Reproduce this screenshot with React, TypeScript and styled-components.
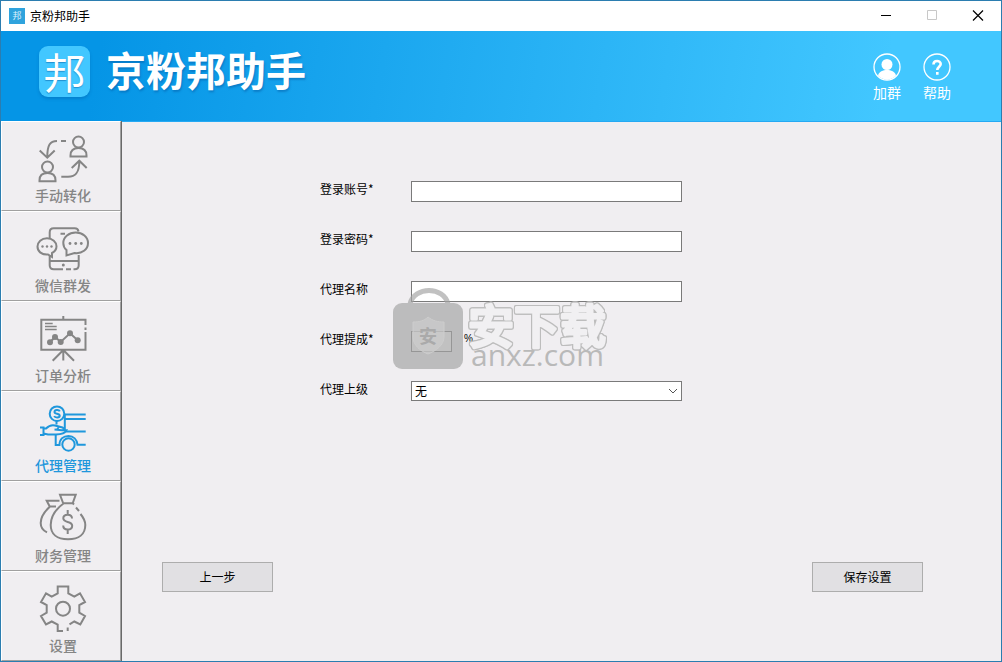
import React from "react";
import styled, { createGlobalStyle, css } from "styled-components";

const SANS = `"Noto Sans CJK SC", "Noto Sans", sans-serif`;
const LINE = "#7a7a7a";
const FACE = "#f0eef1";

const GlobalStyle = createGlobalStyle`
  *, *::before, *::after { box-sizing: border-box; }
  body { margin: 0; font: 12px/20px ${SANS}; color: #000; background: ${FACE}; }
  button, input, select { font: inherit; color: inherit; border-radius: 0; }
`;

const Window = styled.div`
  min-height: 100vh;
  display: flex;
  flex-direction: column;
  border: 1px solid #2b7db0;
  background: ${FACE};
`;

const TitleBar = styled.div`
  display: flex;
  align-items: center;
  height: 30px;
  padding-left: 8px;
  background: #fff;
  line-height: 18px;
`;

const TitleIcon = styled.span`
  display: grid;
  place-items: center;
  width: 16px;
  height: 16px;
  margin-right: 5px;
  background: #2fa3dd;
  color: #d9f2ff;
  font-size: 9px;
  line-height: 16px;
`;

const WindowControls = styled.div`
  display: flex;
  margin-left: auto;
`;

const WindowButton = styled.button`
  display: grid;
  place-items: center;
  width: 46px;
  height: 30px;
  padding: 0;
  border: 0;
  background: transparent;
`;

const Banner = styled.header`
  display: flex;
  align-items: center;
  height: 90px;
  padding: 0 39px 0 38px;
  background: linear-gradient(100deg, #0595e6 10%, #42c7ff 88%);
  color: #fff;
`;

const Logo = styled.span`
  display: grid;
  place-items: center;
  width: 51px;
  height: 51px;
  margin: 0 16px 10px 0;
  border-radius: 9px;
  background: #42c7ff;
  box-shadow: 0 2px 3px rgba(0, 80, 150, 0.3);
  font-size: 42px;
  line-height: 48px;
  text-shadow: 0 1px 1px rgba(0, 90, 160, 0.5);
`;

const BrandName = styled.h1`
  margin: 0 auto 14px 0;
  font-size: 40px;
  line-height: 50px;
  font-weight: 700;
  text-shadow: 1px 2px 2px rgba(0, 70, 140, 0.35);
`;

const BannerAction = styled.button`
  display: flex;
  flex-direction: column;
  align-items: center;
  width: 50px;
  padding: 4px 0 0;
  border: 0;
  background: transparent;
  color: #fff;
  font-size: 14px;
  line-height: 22px;
`;

const Body = styled.div`
  flex: 1;
  display: flex;
`;

const Sidebar = styled.nav`
  width: 121px;
  border-right: 1px solid #696969;
`;

const NavItem = styled.button<{ $active?: boolean }>`
  display: flex;
  flex-direction: column;
  align-items: center;
  width: 100%;
  height: 90px;
  padding: 10px 0 0 4px;
  border: 1px solid;
  border-color: #fff #a0a0a0 #a0a0a0 #fff;
  background: transparent;
  color: ${(p) => (p.$active ? "#1f97dc" : "#858585")};
  font-size: 14px;
  font-weight: 500;
  line-height: 18px;
`;

const NavIcon = styled.svg`
  display: block;
  width: 56px;
  height: 54px;
  fill: none;
  stroke: currentColor;
  stroke-width: 2;
`;

const Content = styled.main`
  flex: 1;
  display: flex;
  flex-direction: column;
  justify-content: space-between;
  border-top: 1px solid #25a9f3;
`;

const Form = styled.form`
  position: relative;
  display: grid;
  gap: 29px;
  width: 362px;
  margin: 59px 0 40px 198px;
`;

const Row = styled.div`
  display: flex;
  height: 21px;
`;

const Label = styled.label`
  width: 91px;
  line-height: 16px;
`;

const field = css`
  border: 1px solid ${LINE};
  background: #fff;
  outline: 0;
`;

const TextBox = styled.input<{ $short?: boolean }>`
  ${field}
  width: ${(p) => (p.$short ? "41px" : "271px")};
  height: 21px;
  padding: 0 4px;
`;

const Unit = styled.span`
  margin-left: 12px;
  font-family: "Liberation Sans", sans-serif;
  font-size: 10px;
  line-height: 16px;
`;

const SelectWrap = styled.div`
  display: grid;
  grid-template: "box" 20px / 271px;
  align-items: center;
`;

const Select = styled.select`
  ${field}
  grid-area: box;
  height: 20px;
  padding: 0 3px;
  line-height: 16px;
  appearance: none;
`;

const Chevron = styled.svg`
  grid-area: box;
  justify-self: end;
  margin-right: 4px;
  fill: none;
  stroke: #555;
  pointer-events: none;
`;

const Actions = styled.div`
  display: flex;
  justify-content: space-between;
  padding: 0 78px 69px 40px;
`;

const PushButton = styled.button`
  width: 111px;
  height: 30px;
  padding: 0;
  border: 1px solid #adadad;
  background: #e1e0e3;
`;

const Watermark = styled.svg`
  position: absolute;
  left: 72px;
  top: 106px;
  width: 220px;
  height: 86px;
  pointer-events: none;
`;

const Outlined = styled.text`
  font: 500 46px/1 ${SANS};
  fill: #f1f0f2;
  stroke: #f1f0f2;
  stroke-width: 3;
  stroke-linejoin: round;
  filter: drop-shadow(1px 0 0 #bdbdbd) drop-shadow(-1px 0 0 #bdbdbd)
    drop-shadow(0 1px 0 #bdbdbd) drop-shadow(0 -1px 0 #bdbdbd);
`;

const Domain = styled.text`
  font: 30px/1 "Open Sans", sans-serif;
  fill: #b9b9b9;
`;

const navItems = [
  {
    label: "手动转化",
    icon: (
      <>
        <circle cx="43.5" cy="10" r="5.5" />
        <path d="M35.5 24.5V23.5C35.5 18.500 38.500 16 43.500 16S51.500 18.500 51.500 23.500V24.500Z" />
        <circle cx="12.500" cy="35" r="5.500" />
        <path d="M4.500 49.300V48.300C4.500 43.300 7.500 41 12.500 41S20.500 43.300 20.500 48.300V49.300Z" />
        <path d="M31 9H26M22 9C15 9 12.300 13 12.300 25M4.700 18.500L12.300 25.700L19.700 18.500" />
        <path d="M26.300 44.700H33C41 44.700 44.300 40 44.300 29.500M36.700 36L44.300 28.700L51.700 36" />
      </>
    ),
  },
  {
    label: "微信群发",
    icon: (
      <>
        <path d="M14.700 16V10.300Q14.700 6.300 18.700 6.300H39.700Q43 6.300 43.500 9.500M14.700 33V43.300Q14.700 47.300 18.700 47.300H28M31 47.300H36M38.500 47.300H39.700Q43.700 47.300 43.700 43.300V33M15 39H43.500M25.500 11.700H30" />
        <circle cx="28.300" cy="43" r="1.500" fill="currentColor" stroke="none" />
        <path d="M13 32.500C6 33 2.500 29 2.500 24.500C2.500 20 6.500 16.200 12 16.200C17.500 16.200 21.500 20 21.500 24.300C21.500 27 20 29.500 17 31V35Z" />
        <path d="M31.500 28C29 26 28.300 23.500 28.300 21C28.300 15 34 10.500 40.700 10.500C47.500 10.500 53 15 53 21C53 27.500 47 32 39.500 31L31.500 33.500Z" />
        <g fill="currentColor" stroke="none">
          <circle cx="7.500" cy="24.500" r="1.200" />
          <circle cx="12" cy="24.500" r="1.200" />
          <circle cx="16.500" cy="24.500" r="1.200" />
          <circle cx="35" cy="21.500" r="1.400" />
          <circle cx="40.700" cy="21.500" r="1.400" />
          <circle cx="46.300" cy="21.500" r="1.400" />
        </g>
      </>
    ),
  },
  {
    label: "订单分析",
    icon: (
      <>
        <path d="M50.500 13V7.700H6.300V37.700H50.500V20M50.500 15.500V18M28.300 4V7.700M28.300 38V48.500M28.300 38L17.700 48.700M28.300 38L39 48.700" />
        <path d="M10 11.500H17.700M10 14.500H21.700M10 17.500H21.700" strokeWidth="1.300" />
        <path d="M15 30.300L20 25L25.700 30L35 21.300L42.700 28.300" />
        <g fill="currentColor" stroke="none">
          <circle cx="15" cy="30.300" r="3" />
          <circle cx="20" cy="25" r="3" />
          <circle cx="25.700" cy="30" r="3" />
          <circle cx="35" cy="21.300" r="3" />
          <circle cx="42.700" cy="28.300" r="3" />
        </g>
      </>
    ),
  },
  {
    label: "代理管理",
    icon: (
      <>
        <circle cx="22" cy="11.700" r="7.300" />
        <path d="M24.800 9.300C24 7.500 19.500 7.500 19.500 10C19.500 12.500 24.700 11 24.700 13.700C24.700 16 20 16 19.200 14" />
        <path d="M29.500 12.500H50.700M30 17H50.700M29.800 13V28M31 29.500H50.700M21.500 19V22.500" />
        <path d="M5 25.500H8.500V33H5M8.500 26.500H11C14 23.500 17 22.700 20 23.500L27.500 25.500C29.500 26.500 28.500 28.300 27 28.200L19.500 27.500M22 27.700L24 24.500M27 28.200H31.500C30 31.500 26 32.500 21 32.500H13L8.500 31.500" />
        <path d="M20.700 33V43H24.500C24.500 37 28.500 34 33.500 34C38.500 34 42 37.500 42.500 42.700H50.700" />
        <circle cx="33.500" cy="42.500" r="6.200" />
      </>
    ),
  },
  {
    label: "财务管理",
    icon: (
      <>
        <path d="M25 2.800H40.700L37.700 11.300H28.200ZM28.500 11.500C21 17 15.700 25 15.700 33C15.700 42 22 47.300 33 47.300C44 47.300 50.300 42 50.300 33C50.300 29 48 25 45.500 22M38 11.500L39 12.500M41 15.500L44 19" />
        <path d="M24.500 8.700H11.700L14.700 14.500H21M15 14.500C9 20 5.700 26 5.700 31C5.700 35.500 8 38.500 12 40.300" />
        <path d="M37 26.500C37 23.500 35.500 22.700 32.700 22.700C30 22.700 28.300 24 28.300 26.300C28.300 31.500 37.200 28.300 37.200 33.700C37.200 36.300 35.500 37.500 32.700 37.500C29.800 37.500 28.200 36.300 28.200 33.500M32.700 18V22.500M32.700 37.500V42" />
      </>
    ),
  },
  {
    label: "设置",
    icon: (
      <>
        <path d="M28 49H22.700V42.700L16.700 39.500L11 42.500L6 34L11.700 30.700V23L6 20L11 11.300L16.700 14.700L22.700 11.300V4.500H33.300V11.300L39.300 14.700L45 11.300L50 20L44.300 23V30.700L50 34L45.300 42.500L39.300 39.500L34.500 42.300M32.700 45.500V49" />
        <circle cx="28" cy="26.700" r="7" />
      </>
    ),
  },
];

export default function App() {
  return (
    <Window>
      <GlobalStyle />
      <TitleBar>
        <TitleIcon aria-hidden="true">邦</TitleIcon>
        <span>京粉邦助手</span>
        <WindowControls>
          <WindowButton aria-label="最小化">
            <svg width="12" height="12" stroke="#000">
              <path d="M1 5.500H11" />
            </svg>
          </WindowButton>
          <WindowButton aria-label="最大化" disabled>
            <svg width="12" height="12" stroke="#c8c8c8" fill="none">
              <path d="M1.500 0.500H10.500V9.500H1.500Z" />
            </svg>
          </WindowButton>
          <WindowButton aria-label="关闭">
            <svg width="12" height="12" stroke="#000" strokeWidth="1.200">
              <path d="M1 0.500L11 10.500M11 0.500L1 10.500" />
            </svg>
          </WindowButton>
        </WindowControls>
      </TitleBar>

      <Banner>
        <Logo aria-hidden="true">邦</Logo>
        <BrandName>京粉邦助手</BrandName>
        <BannerAction>
          <svg width="28" height="28" fill="none" stroke="#fff">
            <circle cx="14" cy="14" r="13" strokeWidth="1.300" />
            <g fill="#fff" stroke="none">
              <circle cx="14" cy="11.500" r="5.500" />
              <path d="M5 22.500C6 18.500 10 17 14 17S22 18.500 23 22.500C18.500 28 9.500 28 5 22.500Z" />
            </g>
          </svg>
          加群
        </BannerAction>
        <BannerAction>
          <svg width="28" height="28" fill="none" stroke="#fff">
            <circle cx="14" cy="14" r="13" strokeWidth="1.300" />
            <path
              d="M10.500 11.500C10.500 6.800 17.700 7 17.700 11C17.700 13.500 14.300 14 14.300 17M14.300 19V21.800"
              strokeWidth="2.600"
            />
          </svg>
          帮助
        </BannerAction>
      </Banner>

      <Body>
        <Sidebar>
          {navItems.map((item) => (
            <NavItem key={item.label} $active={item.label === "代理管理"}>
              <NavIcon viewBox="0 0 56 54" aria-hidden="true">
                {item.icon}
              </NavIcon>
              {item.label}
            </NavItem>
          ))}
        </Sidebar>

        <Content>
          <Form onSubmit={(e) => e.preventDefault()}>
            <Row>
              <Label htmlFor="account">登录账号*</Label>
              <TextBox id="account" />
            </Row>
            <Row>
              <Label htmlFor="password">登录密码*</Label>
              <TextBox id="password" type="password" />
            </Row>
            <Row>
              <Label htmlFor="agent">代理名称</Label>
              <TextBox id="agent" />
            </Row>
            <Row>
              <Label htmlFor="rate">代理提成*</Label>
              <TextBox id="rate" $short />
              <Unit>%</Unit>
            </Row>
            <Row>
              <Label htmlFor="parent">代理上级</Label>
              <SelectWrap>
                <Select id="parent">
                  <option>无</option>
                </Select>
                <Chevron width="10" height="6">
                  <path d="M1 1L5 5L9 1" />
                </Chevron>
              </SelectWrap>
            </Row>
            <Watermark viewBox="0 0 220 86" aria-hidden="true">
              <g opacity="0.67">
                <path d="M18 17C22 -1 52 -1 56 17" fill="none" stroke="#a4a4a4" strokeWidth="5" />
                <rect x="1" y="16" width="70" height="66" rx="9" fill="#a4a4a4" />
              </g>
              <path
                d="M36 30C41 34 46 35 52 35V50C52 58 44 64 36 67C28 64 21 58 21 50V35C27 35 32 34 36 30Z"
                fill="#cfcfcf"
                fillOpacity="0.6"
                stroke="#cdcdcd"
              />
              <text x="27" y="56" fontSize="18" fontWeight="700" fill="#aaa">
                安
              </text>
              <Outlined x="76" y="56">安下载</Outlined>
              <Domain x="79" y="79">anxz.com</Domain>
            </Watermark>
          </Form>

          <Actions>
            <PushButton>上一步</PushButton>
            <PushButton>保存设置</PushButton>
          </Actions>
        </Content>
      </Body>
    </Window>
  );
}
